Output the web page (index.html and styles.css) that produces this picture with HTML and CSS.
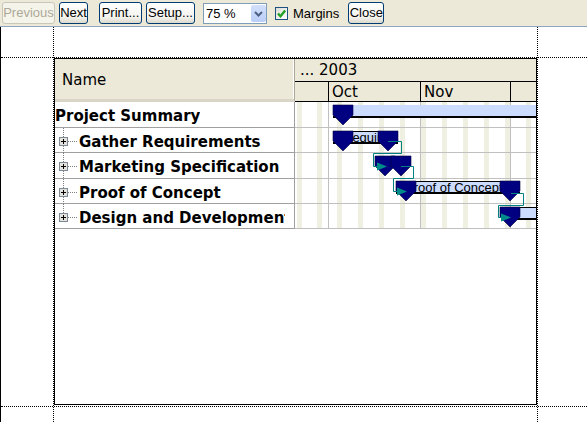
FILE: index.html
```html
<!DOCTYPE html>
<html lang="en">
<head>
    <meta charset="UTF-8">
    <title>Print Preview - Gantt</title>
    <link rel="stylesheet" href="styles.css">
</head>
<body>
    <div class="toolbar">
        <button class="btn btn-prev" disabled>Previous</button>
        <button class="btn btn-next">Next</button>
        <button class="btn btn-print">Print...</button>
        <button class="btn btn-setup">Setup...</button>
        <div class="zoom-box">
            <span class="zoom-value">75 %</span>
            <span class="zoom-drop">
                <svg width="15" height="17" viewBox="0 0 15 17"><path d="M4 7 L7.5 10.5 L11 7" fill="none" stroke="#4d6185" stroke-width="2"/></svg>
            </span>
        </div>
        <label class="check-label">
            <span class="check">
                <svg width="11" height="11" viewBox="0 0 11 11"><polyline points="2,5.5 4.5,8.2 9.2,2.6" fill="none" stroke="#21a121" stroke-width="2.4"/></svg>
            </span>
            Margins
        </label>
        <button class="btn btn-close">Close</button>
    </div>

    <div class="preview">
        <!-- margin guides -->
        <div class="guide guide-h guide-top"></div>
        <div class="guide guide-h guide-bottom"></div>
        <div class="guide guide-v guide-left"></div>
        <div class="guide guide-v guide-right"></div>

        <div class="sheet">
            <div class="name-col">
                <div class="name-head">Name</div>
                <div class="task-list">
                    <div class="task summary"><span class="task-name">Project Summary</span></div>
                    <div class="task">
                        <svg class="tree" width="24" height="25" viewBox="0 0 24 25"><line x1="8.5" y1="0" x2="8.5" y2="25" class="dots"/><line x1="13" y1="13.5" x2="23" y2="13.5" class="dots"/><rect x="4.5" y="9.5" width="8" height="8" class="box"/><path d="M6 13.5 H11 M8.5 11 V16" stroke="#000"/></svg>
                        <span class="task-name">Gather Requirements</span>
                    </div>
                    <div class="task">
                        <svg class="tree" width="24" height="26" viewBox="0 0 24 26"><line x1="8.5" y1="0" x2="8.5" y2="26" class="dots"/><line x1="13" y1="13.5" x2="23" y2="13.5" class="dots"/><rect x="4.5" y="9.5" width="8" height="8" class="box"/><path d="M6 13.5 H11 M8.5 11 V16" stroke="#000"/></svg>
                        <span class="task-name">Marketing Specification</span>
                    </div>
                    <div class="task">
                        <svg class="tree" width="24" height="25" viewBox="0 0 24 25"><line x1="8.5" y1="0" x2="8.5" y2="25" class="dots"/><line x1="13" y1="13.5" x2="23" y2="13.5" class="dots"/><rect x="4.5" y="9.5" width="8" height="8" class="box"/><path d="M6 13.5 H11 M8.5 11 V16" stroke="#000"/></svg>
                        <span class="task-name">Proof of Concept</span>
                    </div>
                    <div class="task">
                        <svg class="tree" width="24" height="25" viewBox="0 0 24 25"><line x1="8.5" y1="0" x2="8.5" y2="10" class="dots"/><line x1="13" y1="13.5" x2="23" y2="13.5" class="dots"/><rect x="4.5" y="9.5" width="8" height="8" class="box"/><path d="M6 13.5 H11 M8.5 11 V16" stroke="#000"/></svg>
                        <span class="task-name">Design and Development</span>
                    </div>
                </div>
            </div>

            <div class="chart-col">
                <div class="year-row">... 2003</div>
                <div class="month-row">
                    <span class="month lead"></span>
                    <span class="month oct">Oct</span>
                    <span class="month nov">Nov</span>
                    <span class="month dec"></span>
                </div>
                <svg class="chart-body" width="241" height="127" viewBox="0 0 241 127">
                    <defs>
                        <clipPath id="clipReq"><rect x="38" y="29" width="65" height="13"/></clipPath>
                        <clipPath id="clipPoc"><rect x="101" y="79" width="124" height="13"/></clipPath>
                    </defs>
                    <!-- weekend stripes -->
                    <g fill="#efefe2">
                        <rect x="2" y="0" width="5" height="126"/>
                        <rect x="22" y="0" width="5" height="126"/>
                        <rect x="42" y="0" width="5" height="126"/>
                        <rect x="63" y="0" width="5" height="126"/>
                        <rect x="84" y="0" width="5" height="126"/>
                        <rect x="105" y="0" width="5" height="126"/>
                        <rect x="126" y="0" width="5" height="126"/>
                        <rect x="147" y="0" width="5" height="126"/>
                        <rect x="168" y="0" width="5" height="126"/>
                        <rect x="189" y="0" width="5" height="126"/>
                        <rect x="210" y="0" width="5" height="126"/>
                        <rect x="231" y="0" width="5" height="126"/>
                    </g>
                    <!-- grid -->
                    <g fill="#c0c0c0">
                        <rect x="33" y="0" width="1" height="127"/>
                        <rect x="125" y="0" width="1" height="127"/>
                        <rect x="215" y="0" width="1" height="127"/>
                        <rect x="0" y="25" width="241" height="1"/>
                        <rect x="0" y="50" width="241" height="1"/>
                        <rect x="0" y="76" width="241" height="1"/>
                        <rect x="0" y="101" width="241" height="1"/>
                        <rect x="0" y="126" width="241" height="1"/>
                    </g>

                    <!-- bars -->
                    <rect x="38" y="3" width="203" height="11" fill="#ccdcff"/>
                    <rect x="38" y="14" width="203" height="2" fill="#000"/>

                    <rect x="38" y="29" width="65" height="11" fill="#ccdcff"/>
                    <rect x="38" y="29" width="65" height="1" fill="#000"/>
                    <rect x="38" y="40" width="65" height="2" fill="#000"/>
                    <text x="48" y="39.5" class="bar-text" clip-path="url(#clipReq)">Requirements</text>

                    <rect x="101" y="79" width="124" height="11" fill="#ccdcff"/>
                    <rect x="101" y="79" width="124" height="1" fill="#000"/>
                    <rect x="101" y="90" width="124" height="2" fill="#000"/>
                    <text x="110" y="89.5" class="bar-text" clip-path="url(#clipPoc)">Proof of Concept</text>

                    <rect x="215" y="105" width="26" height="11" fill="#ccdcff"/>
                    <rect x="215" y="105" width="26" height="1" fill="#000"/>
                    <rect x="215" y="116" width="26" height="2" fill="#000"/>

                    <!-- start / end markers -->
                    <g class="marker">
                        <polygon points="38,3 58,3 58,13 48,23 38,13"/>
                        <polygon points="38,29 58,29 58,39 48,49 38,39"/>
                        <polygon points="83,29 103,29 103,39 93,49 83,39"/>
                        <polygon points="80,54 100,54 100,64 90,74 80,64"/>
                        <polygon points="96,54 116,54 116,64 106,74 96,64"/>
                        <polygon points="101,79 121,79 121,89 111,99 101,89"/>
                        <polygon points="205,79 225,79 225,89 215,99 205,89"/>
                        <polygon points="205,105 225,105 225,115 215,125 205,115"/>
                    </g>

                    <!-- dependencies -->
                    <g class="link">
                        <path d="M93 39.5 H106.5 V51.5 H78.5 V64.5 H84"/>
                        <path d="M106 64.5 H118.5 V76.5 H98.5 V89.5 H103"/>
                        <path d="M216 91.5 H228.5 V103.5 H203.5 V115.5 H207"/>
                    </g>
                    <g fill="#008b8b">
                        <polygon points="82,60.5 92,64.5 82,68.5"/>
                        <polygon points="102,85.5 112,89.5 102,93.5"/>
                        <polygon points="206,111.5 216,115.5 206,119.5"/>
                    </g>
                </svg>
            </div>
        </div>
    </div>
</body>
</html>
```

FILE: styles.css
```css
body {
    margin: 0;
    font-family: "Liberation Sans", Arial, sans-serif;
    font-size: 13px;
    background: #fff;
    overflow: hidden;
}

/* toolbar */
.toolbar {
    display: flex;
    align-items: center;
    gap: 4px;
    height: 26px;
    padding-left: 2px;
    background: #ece9d8;
    border-bottom: 1px solid #8fa4bf;
}
.btn {
    height: 22px;
    box-sizing: border-box;
    padding: 0;
    border: 1px solid #003c74;
    border-radius: 3px;
    background: linear-gradient(180deg, #ffffff 0%, #f4f3ee 70%, #dcd8cc 100%);
    font-family: inherit;
    font-size: 13px;
    line-height: 20px;
    color: #000;
    cursor: pointer;
}
.btn:disabled {
    border-color: #c9c7ba;
    background: #f5f4ea;
    color: #aca899;
}
.btn-prev { width: 53px; }
.btn-next { width: 29px; }
.btn-print { width: 43px; margin-left: 7px; }
.btn-setup { width: 49px; }
.btn-close { width: 36px; margin-left: 5px; }

.zoom-box {
    display: flex;
    align-items: center;
    width: 64px;
    height: 21px;
    box-sizing: border-box;
    margin-left: 4px;
    border: 1px solid #7f9db9;
    background: #fff;
}
.zoom-value {
    padding-left: 2px;
    flex: 1;
}
.zoom-drop {
    display: flex;
    width: 15px;
    height: 17px;
    border-radius: 2px;
    background: linear-gradient(180deg, #d3e0fb 0%, #b9cdf6 100%);
}

.check-label {
    display: flex;
    align-items: center;
    gap: 5px;
    margin-left: 4px;
}
.check {
    display: flex;
    align-items: center;
    justify-content: center;
    width: 13px;
    height: 13px;
    box-sizing: border-box;
    border: 1px solid #1c5180;
    background: linear-gradient(135deg, #dcdcd7 0%, #ffffff 100%);
}

/* print preview surface */
.preview {
    position: relative;
    height: 395px;
    box-sizing: border-box;
    padding: 31px 0 0 53px;
    border-left: 1px solid #000;
    background: #fff;
}
.guide {
    position: absolute;
}
.guide-h {
    left: 0;
    right: 0;
    border-top: 1px dotted #000;
}
.guide-v {
    top: 0;
    bottom: 0;
    border-left: 1px dotted #000;
}
.guide-top { top: 30px; }
.guide-bottom { top: 379px; }
.guide-left { left: 52px; }
.guide-right { left: 536px; }

.sheet {
    display: flex;
    align-items: flex-start;
    width: 483px;
    height: 347px;
    box-sizing: border-box;
    border: 1px solid #000;
}

/* name column */
.name-col {
    width: 240px;
    flex: none;
}
.name-head {
    height: 43px;
    box-sizing: border-box;
    padding: 13px 0 0 7px;
    background: #ece9d8;
    border-right: 1px solid #aca899;
    border-bottom: 3px solid #d9d6c8;
    box-shadow: inset -1px 0 #fff;
    font: 15px/17px "DejaVu Sans", sans-serif;
}
.task-list {
    display: grid;
    grid-template-columns: minmax(0, 1fr);
    grid-template-rows: 26px 25px 26px 25px 25px;
}
.task {
    display: flex;
    align-items: flex-start;
    min-width: 0;
    padding-right: 9px;
    white-space: nowrap;
    border-right: 1px solid #a0a0a0;
    border-bottom: 1px solid #a0a0a0;
    font: bold 15px/17px "DejaVu Sans", sans-serif;
}
.task-name {
    min-width: 0;
    overflow: hidden;
    padding-top: 6px;
}
.tree {
    flex: none;
    display: block;
}
.tree .dots {
    stroke: #808080;
    stroke-dasharray: 1 1;
}
.tree .box {
    fill: #e4e2da;
    stroke: #7a8a99;
}

/* chart column */
.chart-col {
    flex: 1;
}
.year-row {
    height: 23px;
    box-sizing: border-box;
    padding: 3px 0 0 5px;
    background: #ece9d8;
    border-bottom: 1px solid #000;
    font: 15px/17px "DejaVu Sans", sans-serif;
}
.month-row {
    display: flex;
    height: 20px;
    box-sizing: border-box;
    background: #ece9d8;
    border-bottom: 1px solid #000;
}
.month {
    box-sizing: border-box;
    padding: 2px 0 0 3px;
    border-left: 1px solid #000;
    font: 15px/17px "DejaVu Sans", sans-serif;
}
.month.lead { width: 33px; border-left: none; }
.month.oct { width: 92px; }
.month.nov { width: 90px; }
.month.dec { flex: 1; }

.chart-body {
    display: block;
}
.bar-text {
    font-family: "Liberation Sans", Arial, sans-serif;
    font-size: 13px;
    fill: #000;
}
.marker polygon {
    fill: #000080;
    stroke: #000040;
    stroke-width: 0.6;
}
.link path {
    fill: none;
    stroke: #008080;
    stroke-width: 1;
}
```
